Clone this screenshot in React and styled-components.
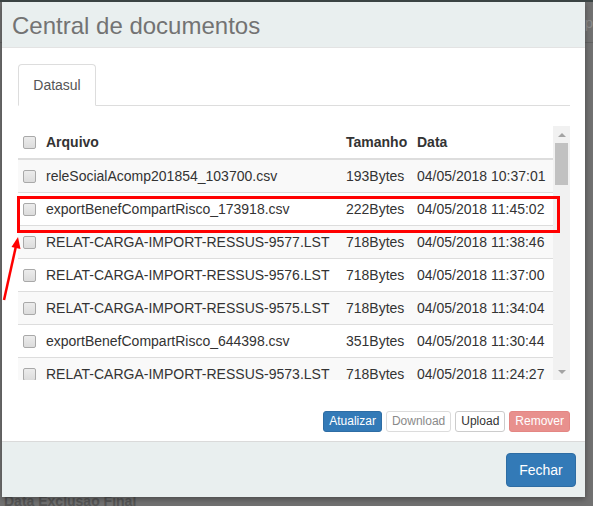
import React from "react";
import styled, { createGlobalStyle } from "styled-components";

const GlobalStyle = createGlobalStyle`
  * {
    margin: 0;
    padding: 0;
    box-sizing: border-box;
  }
  body {
    background: #717171;
    font-family: "Liberation Sans", Arial, sans-serif;
    font-size: 14px;
    color: #333;
  }
`;

const Page = styled.div`
  position: relative;
  width: 593px;
  height: 506px;
  overflow: hidden;
  display: flex;
  flex-direction: column;
  justify-content: space-between;
  border-top: 2px solid #3b4444;
`;

const BgHeader = styled.div`
  height: 41px;
  display: flex;
  align-items: center;
  justify-content: flex-end;
  border-bottom: 1px solid #626262;
  color: #8c8c8c;
  font-size: 15px;
`;

const BgLabel = styled.div`
  padding-left: 4px;
  font-weight: bold;
  font-size: 14px;
  line-height: 14px;
  color: #555;
  margin-bottom: -2px;
`;

const Modal = styled.div`
  position: absolute;
  top: 0;
  left: 2px;
  width: 583px;
  height: 495px;
  background: #fff;
  display: flex;
  flex-direction: column;
  box-shadow: 0 2px 6px rgba(0, 0, 0, 0.35);
`;

const Header = styled.div`
  height: 46px;
  background: #e9efef;
  border-bottom: 1px solid #e3e3e3;
  display: flex;
  align-items: center;
  padding: 3px 10px 0;
`;

const Title = styled.h3`
  font-size: 24px;
  font-weight: normal;
  color: #737373;
  line-height: 1.1;
`;

const Body = styled.div`
  height: 393px;
  padding: 16px 15px 9px 16px;
  display: flex;
  flex-direction: column;
`;

const Nav = styled.div`
  display: flex;
  border-bottom: 1px solid #ddd;
  height: 42px;
`;

const Tab = styled.div`
  width: 78px;
  height: 42px;
  border: 1px solid #ddd;
  border-bottom-color: #fff;
  border-radius: 4px 4px 0 0;
  background: #fff;
  color: #555;
  display: flex;
  align-items: center;
  justify-content: center;
  margin-bottom: -1px;
`;

const TableArea = styled.div`
  margin-top: 20px;
  height: 254px;
  display: flex;
`;

const TableWrap = styled.div`
  flex: 1;
  overflow: hidden;
`;

const Row = styled.div`
  display: grid;
  grid-template-columns: 23px 300px 71px 1fr;
  align-items: center;
  height: ${(p) => (p.$head ? "34px" : "33px")};
  border-bottom: ${(p) => (p.$head ? "2px" : "1px")} solid #ddd;
  background: ${(p) => (p.$striped ? "#f9f9f9" : "#fff")};
  font-weight: ${(p) => (p.$head ? "bold" : "normal")};
  white-space: nowrap;
`;

const Cell = styled.div`
  padding-left: 5px;
  overflow: hidden;
`;

const Check = styled.span`
  display: block;
  width: 13px;
  height: 13px;
  border: 1px solid #a9a9a9;
  border-radius: 2px;
  background: linear-gradient(#ececec, #dcdcdc);
`;

const Scrollbar = styled.div`
  width: 17px;
  background: #f1f1f1;
  display: flex;
  flex-direction: column;
  align-items: center;
`;

const Arrow = styled.div`
  height: 17px;
  width: 17px;
  display: flex;
  align-items: center;
  justify-content: center;
  &::after {
    content: "";
    border-left: 4px solid transparent;
    border-right: 4px solid transparent;
    ${(p) => (p.$down ? "border-top" : "border-bottom")}: 4px solid #a3a3a3;
  }
`;

const Track = styled.div`
  flex: 1;
  width: 100%;
  padding: 0 2px;
`;

const Thumb = styled.div`
  height: 42px;
  background: #c1c1c1;
`;

const ButtonBar = styled.div`
  margin-top: 31px;
  display: flex;
  justify-content: flex-end;
  gap: 4px;
`;

const SmallButton = styled.button`
  font-family: inherit;
  font-size: 12px;
  line-height: 17px;
  height: 21px;
  padding: 0 5px;
  border-radius: 3px;
  border: 1px solid ${(p) => p.$border};
  background: ${(p) => p.$bg};
  color: ${(p) => p.$color};
`;

const Footer = styled.div`
  flex: 1;
  background: #e9efef;
  border-top: 1px solid #dadada;
  display: flex;
  justify-content: flex-end;
  align-items: flex-start;
  padding: 11px 9px 0;
`;

const BigButton = styled.button`
  font-family: inherit;
  font-size: 14px;
  height: 34px;
  width: 70px;
  border-radius: 4px;
  border: 1px solid #2e6da4;
  background: #337ab7;
  color: #fff;
`;

const Highlight = styled.div`
  position: absolute;
  left: 17px;
  top: 194px;
  width: 543px;
  height: 37px;
  border: 3px solid #ff0000;
`;

const Pointer = styled.svg`
  position: absolute;
  left: 0;
  top: 228px;
`;

const files = [
  ["releSocialAcomp201854_103700.csv", "193Bytes", "04/05/2018 10:37:01"],
  ["exportBenefCompartRisco_173918.csv", "222Bytes", "04/05/2018 11:45:02"],
  ["RELAT-CARGA-IMPORT-RESSUS-9577.LST", "718Bytes", "04/05/2018 11:38:46"],
  ["RELAT-CARGA-IMPORT-RESSUS-9576.LST", "718Bytes", "04/05/2018 11:37:00"],
  ["RELAT-CARGA-IMPORT-RESSUS-9575.LST", "718Bytes", "04/05/2018 11:34:04"],
  ["exportBenefCompartRisco_644398.csv", "351Bytes", "04/05/2018 11:30:44"],
  ["RELAT-CARGA-IMPORT-RESSUS-9573.LST", "718Bytes", "04/05/2018 11:24:27"],
];

export default function App() {
  return (
    <Page>
      <GlobalStyle />
      <BgHeader>Grup</BgHeader>
      <BgLabel>Data Exclusão Final</BgLabel>

      <Modal>
        <Header>
          <Title>Central de documentos</Title>
        </Header>
        <Body>
          <Nav>
            <Tab>Datasul</Tab>
          </Nav>
          <TableArea>
            <TableWrap>
              <Row $head>
                <Cell><Check /></Cell>
                <Cell>Arquivo</Cell>
                <Cell>Tamanho</Cell>
                <Cell>Data</Cell>
              </Row>
              {files.map((f, i) => (
                <Row key={f[0]} $striped={i % 2 === 0}>
                  <Cell><Check /></Cell>
                  <Cell>{f[0]}</Cell>
                  <Cell>{f[1]}</Cell>
                  <Cell>{f[2]}</Cell>
                </Row>
              ))}
            </TableWrap>
            <Scrollbar>
              <Arrow />
              <Track>
                <Thumb />
              </Track>
              <Arrow $down />
            </Scrollbar>
          </TableArea>
          <ButtonBar>
            <SmallButton $bg="#337ab7" $border="#2e6da4" $color="#fff">Atualizar</SmallButton>
            <SmallButton $bg="#fff" $border="#dcdcdc" $color="#8a8a8a">Download</SmallButton>
            <SmallButton $bg="#fff" $border="#ccc" $color="#333">Upload</SmallButton>
            <SmallButton $bg="#e8908d" $border="#e48683" $color="#fff">Remover</SmallButton>
          </ButtonBar>
        </Body>
        <Footer>
          <BigButton>Fechar</BigButton>
        </Footer>
      </Modal>

      <Highlight />
      <Pointer width="24" height="74" viewBox="0 228 24 74">
        <line x1="4" y1="298" x2="16" y2="244" stroke="#ff0000" strokeWidth="2.5" />
        <polygon points="18,235 20.5,247 11.5,245" fill="#ff0000" />
      </Pointer>
    </Page>
  );
}
